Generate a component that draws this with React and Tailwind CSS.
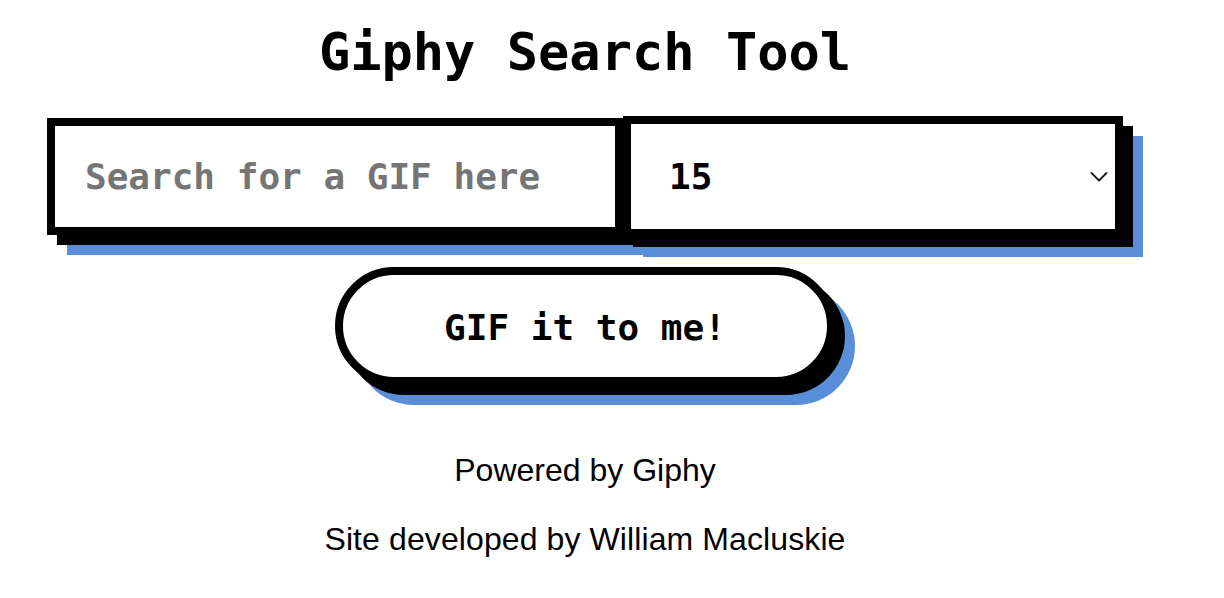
import React from "react";

export default function App() {
  const mono = { fontFamily: '"DejaVu Sans Mono", "Liberation Mono", monospace' };
  return (
    <div className="w-[1170px] flex flex-col items-center bg-white text-black">
      <h1
        className="mt-[22px] text-[52px] leading-[60px] font-bold"
        style={mono}
      >
        Giphy Search Tool
      </h1>
      <div className="mt-[34px] flex items-center" style={mono}>
        <input
          type="text"
          placeholder="Search for a GIF here"
          className="w-[576px] h-[117px] border-8 border-black bg-white pl-[30px] text-[36px] font-bold outline-none placeholder:text-[#757575] shadow-[10px_10px_0_0_#000,20px_20px_0_0_#5b8ed8]"
        />
        <div className="relative">
          <select
            defaultValue="15"
            className="block w-[500px] h-[121px] appearance-none rounded-none border-8 border-black bg-white pl-[38px] text-[36px] font-bold text-black outline-none shadow-[10px_10px_0_0_#000,20px_20px_0_0_#5b8ed8]"
          >
            <option value="5">5</option>
            <option value="10">10</option>
            <option value="15">15</option>
            <option value="20">20</option>
            <option value="25">25</option>
          </select>
          <svg
            className="pointer-events-none absolute right-[15px] top-1/2 -translate-y-1/2"
            width="18"
            height="11"
            viewBox="0 0 18 11"
            fill="none"
          >
            <path d="M1.5 1.5 L9 9 L16.5 1.5" stroke="#1a1a1a" strokeWidth="1.8" strokeLinecap="round" strokeLinejoin="round" />
          </svg>
        </div>
      </div>
      <button
        className="mt-[30px] w-[500px] h-[118px] rounded-full border-8 border-black bg-white pt-[4px] text-[36px] font-bold text-black shadow-[10px_10px_0_0_#000,20px_20px_0_0_#5b8ed8]"
        style={mono}
      >
        GIF it to me!
      </button>
      <div className="mt-[35px] flex flex-col items-center" style={{ fontFamily: '"Liberation Sans", Arial, sans-serif' }}>
        <p className="my-[32px] text-[32px] leading-[37px]">Powered by Giphy</p>
        <p className="mb-[32px] text-[32px] leading-[37px] tracking-[0.1px]">Site developed by William Macluskie</p>
      </div>
    </div>
  );
}
